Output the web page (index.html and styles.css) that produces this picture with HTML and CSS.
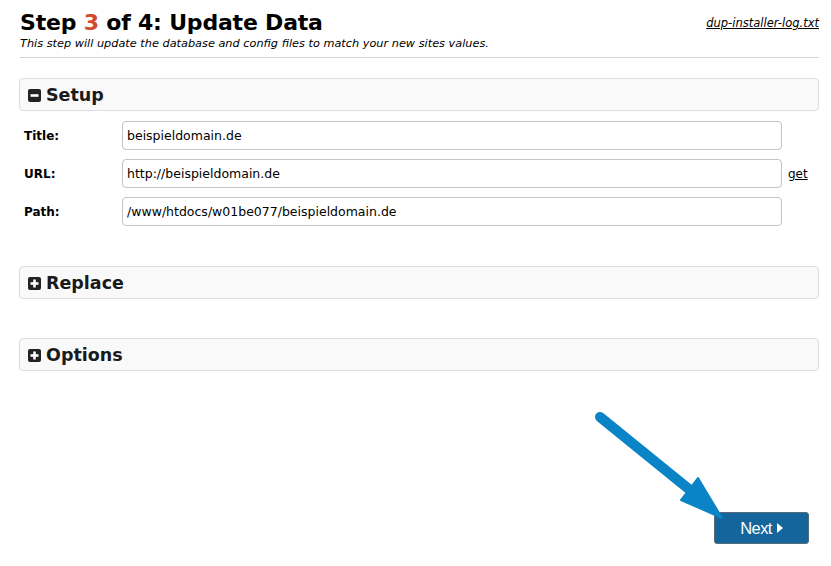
FILE: index.html
```html
<!DOCTYPE html>
<html>
<head>
<meta charset="utf-8">
<link rel="stylesheet" href="styles.css">
</head>
<body>
<div class="page">
  <div class="hdr">
    <div class="hdr-left">
      <h1 class="title">Step <span class="num">3</span> of 4: Update Data</h1>
      <div class="sub">This step will update the database and config files to match your new sites values.</div>
    </div>
    <a class="log" href="#">dup-installer-log.txt</a>
  </div>
  <hr class="rule">

  <div class="panel"><span class="ico"><svg width="13" height="13" viewBox="0 0 13 13"><rect x="0" y="0" width="13" height="13" rx="2" fill="#222"/><rect x="2.5" y="5.2" width="8" height="2.6" fill="#fff"/></svg></span>Setup</div>
  <div class="form">
    <div class="row"><label class="lbl">Title:</label><div class="inp">beispieldomain.de</div></div>
    <div class="row"><label class="lbl">URL:</label><div class="inp">http://beispieldomain.de</div><a class="get" href="#">get</a></div>
    <div class="row"><label class="lbl">Path:</label><div class="inp">/www/htdocs/w01be077/beispieldomain.de</div></div>
  </div>

  <div class="panel p-replace"><span class="ico"><svg width="13" height="13" viewBox="0 0 13 13"><rect x="0" y="0" width="13" height="13" rx="2" fill="#222"/><rect x="2.5" y="5.2" width="8" height="2.6" fill="#fff"/><rect x="5.2" y="2.5" width="2.6" height="8" fill="#fff"/></svg></span>Replace</div>
  <div class="panel p-options"><span class="ico"><svg width="13" height="13" viewBox="0 0 13 13"><rect x="0" y="0" width="13" height="13" rx="2" fill="#222"/><rect x="2.5" y="5.2" width="8" height="2.6" fill="#fff"/><rect x="5.2" y="2.5" width="2.6" height="8" fill="#fff"/></svg></span>Options</div>

  <div class="footer">
    <button class="next">Next <span class="tri"></span></button>
  </div>
</div>
<svg class="arrow" width="831" height="566" viewBox="0 0 831 566">
  <line x1="600" y1="417" x2="690" y2="490" stroke="#0a84c6" stroke-width="10" stroke-linecap="round"/>
  <polygon points="681,500 698,478 722,518" fill="#0a84c6" stroke="#0a84c6" stroke-width="2" stroke-linejoin="round"/>
</svg>
</body>
</html>
```

FILE: styles.css
```css
html, body { margin: 0; padding: 0; background: #fff; }
body { font-family: "DejaVu Sans", Verdana, sans-serif; color: #000; position: relative; }
.page { width: 800px; margin-left: 19px; padding-top: 9px; }
.hdr { display: flex; justify-content: space-between; align-items: flex-start; padding-left: 1px; }
.title { margin: 0; font-size: 22px; font-weight: bold; line-height: 28px; letter-spacing: -0.2px; }
.num { color: #d3492e; }
.sub { font-size: 11.3px; font-style: italic; line-height: 14px; margin-top: 0; color: #000; }
.log { font-size: 11.5px; font-style: italic; color: #000; text-decoration: underline; margin-top: 7px; }
.rule { border: 0; border-top: 1px solid #d4d4d4; margin: 6px 0 0 1px; height: 0; }
.panel { margin-top: 20px; border: 1px solid #ddd; border-radius: 4px; background: #f9f9f9; display: flex; align-items: center; padding-left: 8px; font-size: 17.5px; font-weight: bold; color: #1a1a1a; box-sizing: border-box; height: 33px; }
.ico { display: inline-flex; margin-right: 5px; margin-top: 1px; }
.form { padding-top: 10px; }
.row { display: flex; align-items: center; height: 29px; margin-bottom: 9px; }
.lbl { width: 98px; padding-left: 5px; font-size: 12px; font-weight: bold; }
.inp { width: 660px; height: 29px; box-sizing: border-box; border: 1px solid #c4c4c4; border-radius: 4px; padding-left: 4px; font-size: 12.5px; display: flex; align-items: center; }
.get { margin-left: 6px; font-size: 12px; color: #000; text-decoration: underline; }
.p-replace { margin-top: 40px; }
.p-options { margin-top: 39px; }
.footer { display: flex; justify-content: flex-end; padding-right: 10px; margin-top: 141px; }
.next { width: 95px; height: 32px; background: #13659c; border: 1px solid #5a6b78; border-radius: 3px; color: #fff; font-family: "Liberation Sans", Arial, sans-serif; font-size: 16.5px; display: flex; align-items: center; justify-content: center; gap: 5px; padding: 0; letter-spacing: -0.6px; }
.tri { display: inline-block; width: 0; height: 0; border-top: 5px solid transparent; border-bottom: 5px solid transparent; border-left: 6px solid #fff; }
.arrow { position: absolute; left: 0; top: 0; pointer-events: none; }
```
